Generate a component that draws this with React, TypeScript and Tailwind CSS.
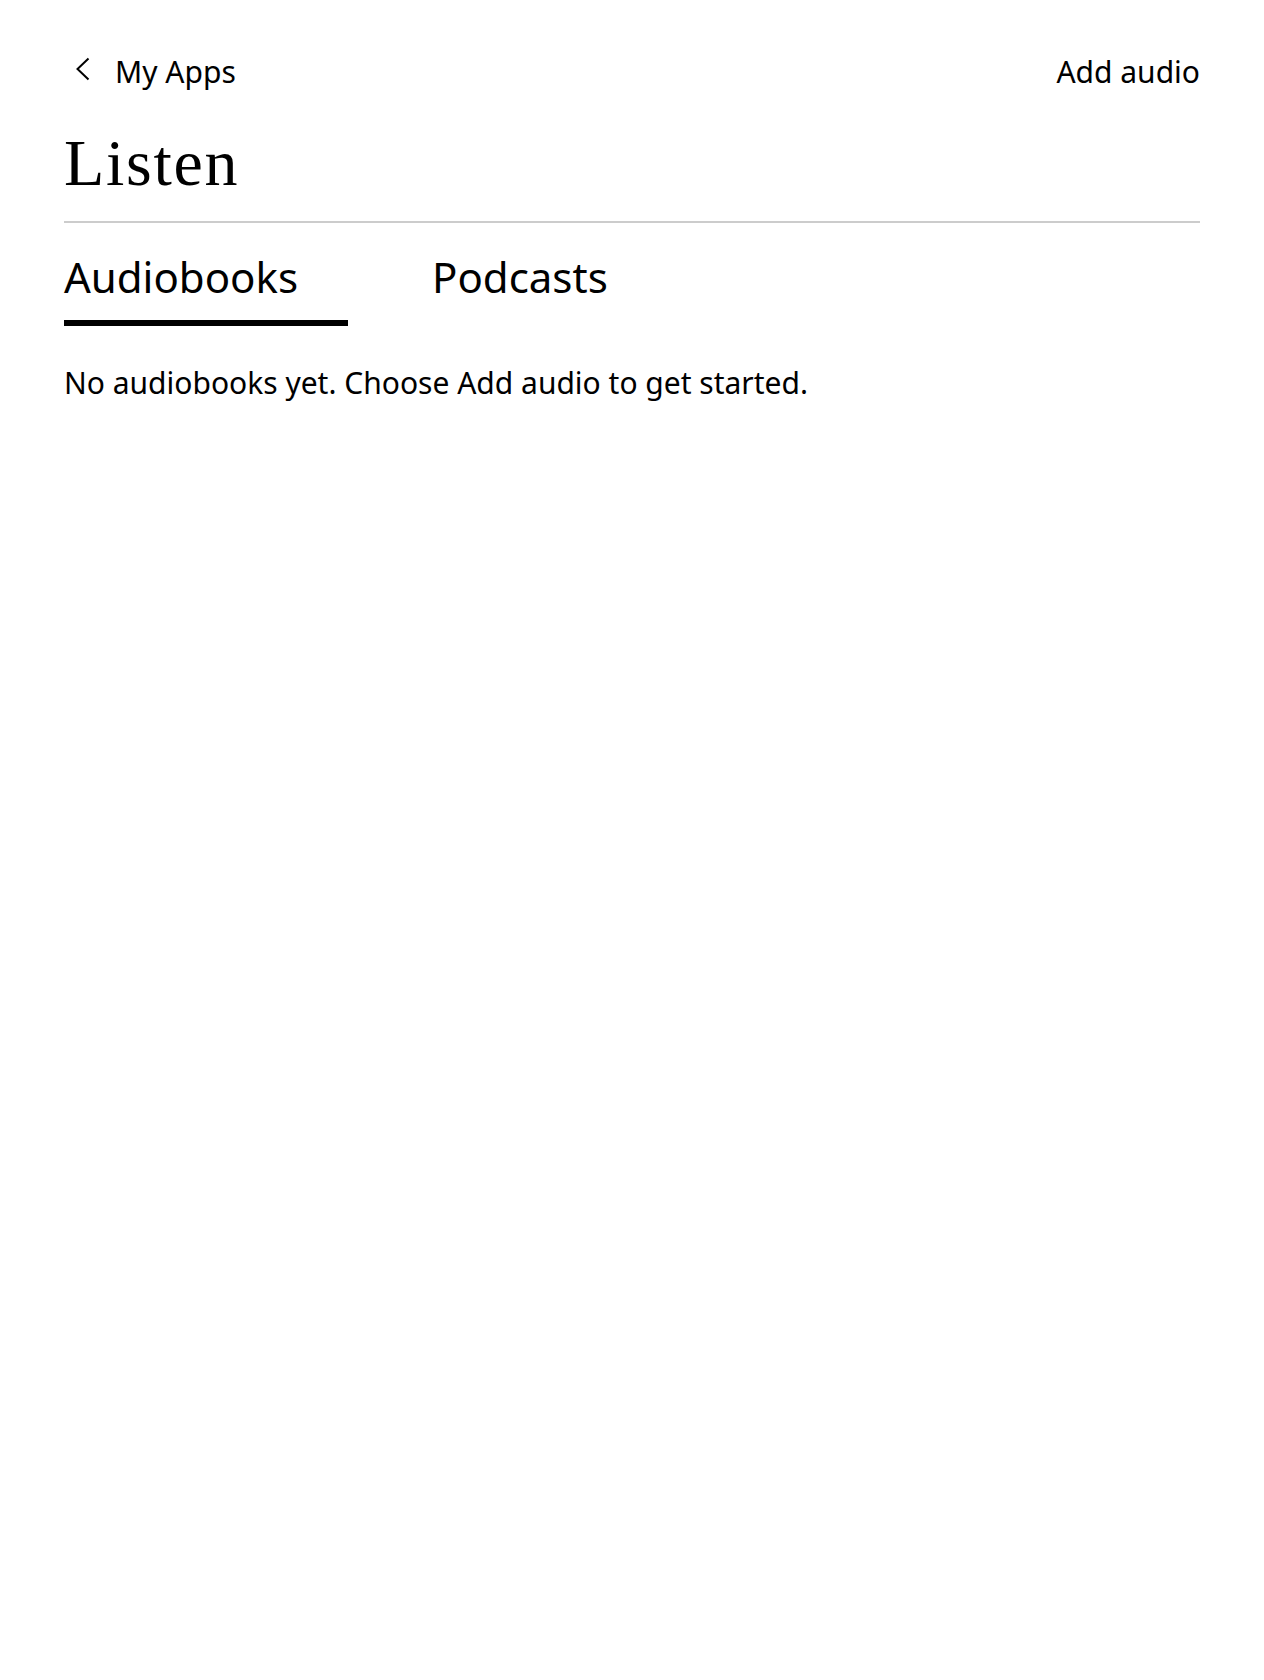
import React from "react";

export default function App() {
  return (
    <div className="min-h-[1680px] w-full bg-white text-black font-['Noto_Sans',sans-serif]">
      <div className="px-16 pt-[57px]">
        <div className="flex items-start justify-between text-[30px] leading-none h-[30px]">
          <div className="flex items-start">
            <svg
              className="ml-[12px] mr-[25px]"
              width="14"
              height="24"
              viewBox="0 0 14 24"
              fill="none"
              stroke="black"
              strokeWidth="2"
            >
              <polyline points="12.5,1.5 1.5,12 12.5,22.5" />
            </svg>
            <span>My Apps</span>
          </div>
          <span>Add audio</span>
        </div>
        <h1 className="mt-[43px] font-['Liberation_Serif',serif] text-[66px] leading-none font-normal tracking-[1.7px]">
          Listen
        </h1>
        <div className="mt-[25px] h-[2px] bg-[#cccccc]" />
        <div className="mt-[33px] flex gap-[84px]">
          <div className="flex w-[284px] flex-col">
            <span className="text-[42px] leading-none">Audiobooks</span>
            <div className="mt-[22px] h-[6px] bg-black" />
          </div>
          <div className="flex flex-col">
            <span className="text-[42px] leading-none">Podcasts</span>
          </div>
        </div>
        <p className="mt-[42px] text-[30px] leading-none">
          No audiobooks yet. Choose Add audio to get started.
        </p>
      </div>
    </div>
  );
}
